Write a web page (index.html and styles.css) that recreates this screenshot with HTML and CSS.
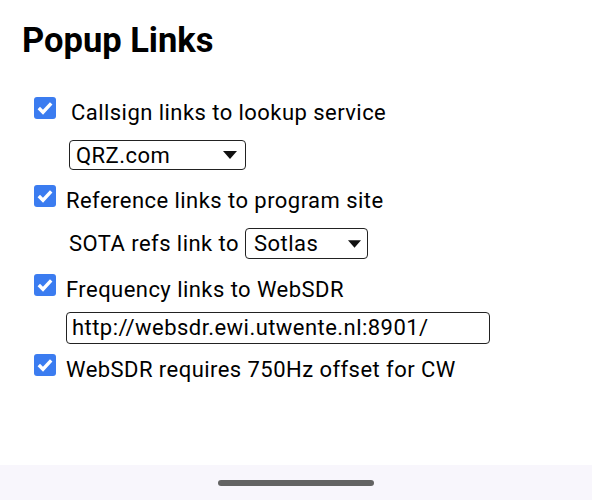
FILE: index.html
```html
<!DOCTYPE html>
<html lang="en">
<head>
<meta charset="utf-8">
<title>Popup Links</title>
<link rel="stylesheet" href="styles.css">
</head>
<body>
<div class="screen">
  <main class="content">
    <h1 class="title">Popup Links</h1>
    <div class="options">
      <div class="row row-check r1">
        <span class="box"><svg viewBox="0 0 22 22" width="22" height="22"><polyline points="4.8,11 9,15.2 17.2,6.4" fill="none" stroke="#fff" stroke-width="3.4"/></svg></span>
        <span class="label label-wide">Callsign links to lookup service</span>
      </div>
      <div class="row row-field r2">
        <span class="select select-qrz"><span class="select-text">QRZ.com</span><svg class="arrow" viewBox="0 0 14 8" width="14" height="8"><polygon points="0,0 14,0 7,8" fill="#111"/></svg></span>
      </div>
      <div class="row row-check r3">
        <span class="box"><svg viewBox="0 0 22 22" width="22" height="22"><polyline points="4.8,11 9,15.2 17.2,6.4" fill="none" stroke="#fff" stroke-width="3.4"/></svg></span>
        <span class="label">Reference links to program site</span>
      </div>
      <div class="row row-field r4">
        <span class="inline-text">SOTA refs link to</span>
        <span class="select select-sotlas"><span class="select-text">Sotlas</span><svg class="arrow" viewBox="0 0 14 8" width="13" height="8"><polygon points="0,0 14,0 7,8" fill="#111"/></svg></span>
      </div>
      <div class="row row-check r5">
        <span class="box"><svg viewBox="0 0 22 22" width="22" height="22"><polyline points="4.8,11 9,15.2 17.2,6.4" fill="none" stroke="#fff" stroke-width="3.4"/></svg></span>
        <span class="label">Frequency links to WebSDR</span>
      </div>
      <div class="row row-field r6">
        <span class="textbox">http://websdr.ewi.utwente.nl:8901/</span>
      </div>
      <div class="row row-check r7">
        <span class="box"><svg viewBox="0 0 22 22" width="22" height="22"><polyline points="4.8,11 9,15.2 17.2,6.4" fill="none" stroke="#fff" stroke-width="3.4"/></svg></span>
        <span class="label">WebSDR requires 750Hz offset for CW</span>
      </div>
    </div>
  </main>
  <div class="navbar"><span class="handle"></span></div>
</div>
</body>
</html>
```
FILE: styles.css
```css
html, body {
  margin: 0;
  padding: 0;
  background: #fff;
}
body {
  font-family: Roboto, "Noto Sans", sans-serif;
  color: #000;
}
.screen {
  width: 592px;
  height: 500px;
  display: flex;
  flex-direction: column;
  overflow: hidden;
}
.content {
  flex: 1;
  padding: 20px 0 0 22px;
  background: #fff;
}
.title {
  margin: 0;
  font-size: 34.5px;
  line-height: 40px;
  font-weight: 700;
  color: #000;
}
.options {
  margin: 37px 0 0 12px;
  display: flex;
  flex-direction: column;
  font-size: 22px;
  letter-spacing: 0.45px;
}
.row {
  display: flex;
}
.row-check {
  height: 22px;
  align-items: flex-start;
}
.row-field {
  align-items: center;
  padding-left: 35px;
}
.r2 { margin-top: 21px; }
.r3 { margin-top: 15px; }
.r4 { margin-top: 21px; }
.r5 { margin-top: 15px; }
.r6 { margin-top: 16px; padding-left: 32px; }
.r7 { margin-top: 10px; }
.box {
  width: 22px;
  height: 22px;
  border-radius: 3px;
  background: #3b7cf0;
  flex: none;
  display: flex;
}
.label {
  line-height: 22px;
  margin: 4.5px 0 0 10px;
  white-space: nowrap;
}
.label-wide {
  margin-left: 15px;
}
.inline-text {
  line-height: 24px;
  margin-right: 6px;
  white-space: nowrap;
}
.select {
  box-sizing: border-box;
  display: flex;
  align-items: center;
  justify-content: space-between;
  border: 1.2px solid #222;
  border-radius: 4px;
  background: #fff;
}
.select-qrz {
  width: 177px;
  height: 30px;
  padding: 0 8px 0 6px;
}
.select-sotlas {
  width: 123px;
  height: 31px;
  padding: 0 6px 0 8px;
}
.select-text {
  line-height: 24px;
  padding-top: 1px;
}
.arrow {
  flex: none;
}
.textbox {
  box-sizing: border-box;
  width: 424px;
  height: 32px;
  border: 1.2px solid #222;
  border-radius: 4px;
  line-height: 30px;
  padding: 0 5px;
  white-space: nowrap;
}
.navbar {
  height: 35px;
  background: #f8f6fc;
  display: flex;
  justify-content: center;
  align-items: flex-start;
}
.handle {
  margin-top: 15px;
  width: 156px;
  height: 6px;
  border-radius: 3px;
  background: #636363;
}
```
